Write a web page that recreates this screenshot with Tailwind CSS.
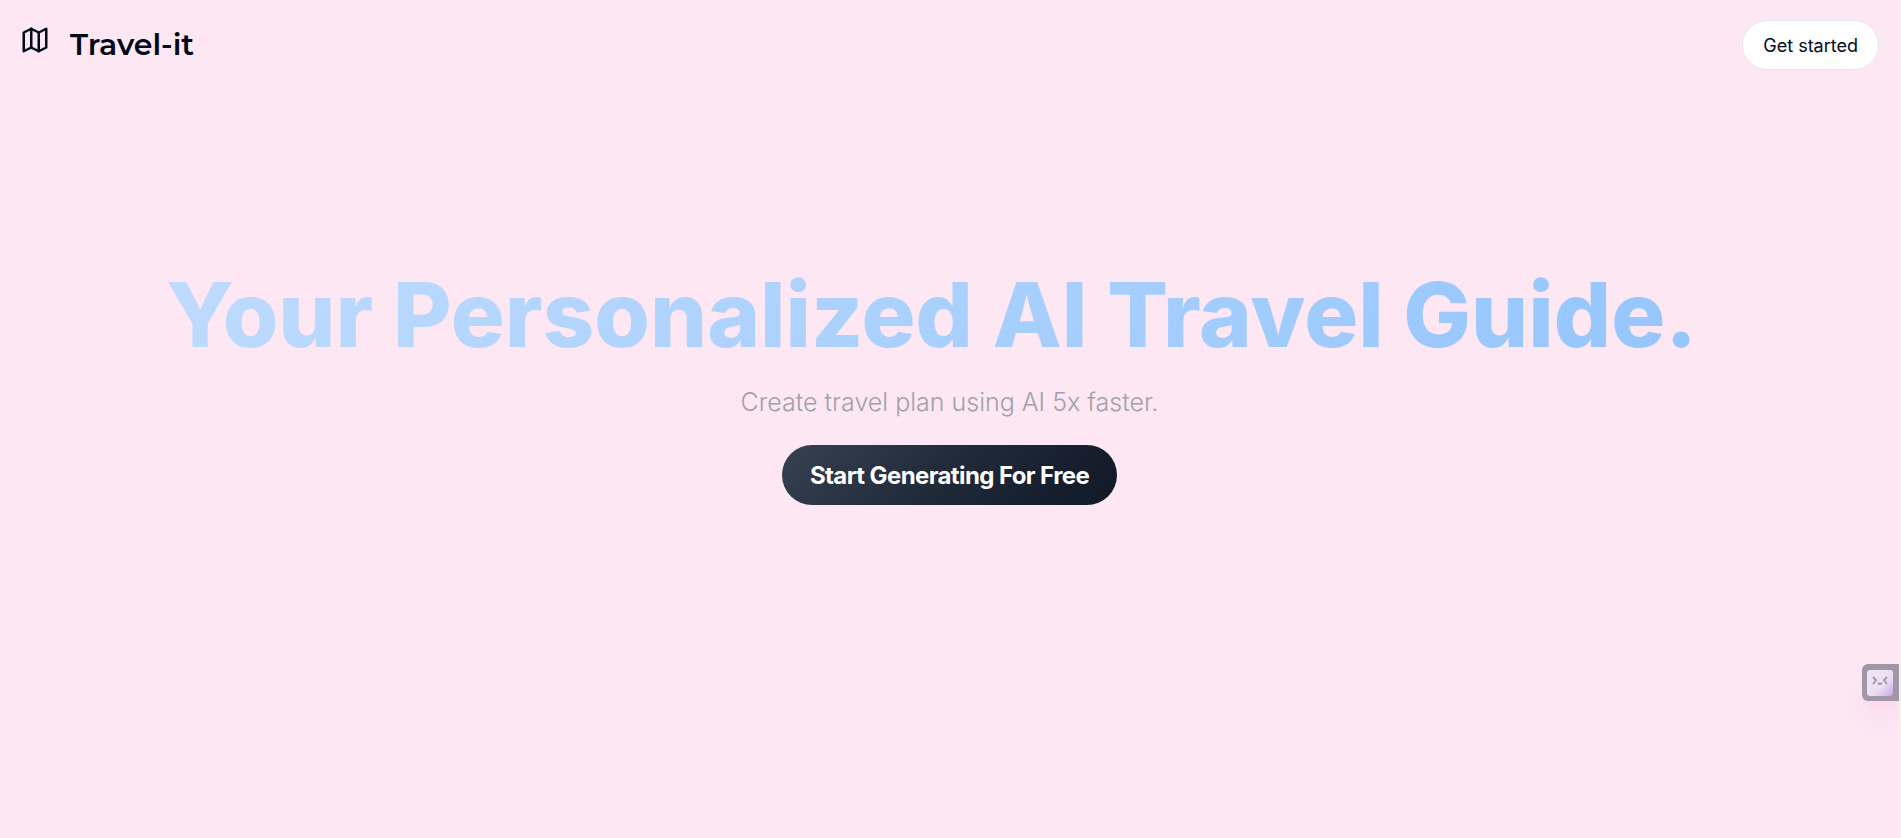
<!DOCTYPE html>
<html lang="en">
<head>
<meta charset="utf-8">
<meta name="viewport" content="width=device-width, initial-scale=1">
<title>Travel-it</title>
<script src="https://cdn.jsdelivr.net/npm/@tailwindcss/browser@4"></script>
</head>
<body class="flex min-h-screen flex-col border-r-2 border-[#f1f1f1] bg-[#fce7f3] font-['Inter',sans-serif] text-[#020817]">
  <header class="flex items-center justify-between px-5 pt-5">
    <a href="#" class="flex items-center gap-5">
      <svg class="mb-2.5 size-[30px]" viewBox="0 0 24 24" fill="none" stroke="currentColor" stroke-width="2" stroke-linecap="round" stroke-linejoin="round" aria-hidden="true">
        <polygon points="3 6 9 3 15 6 21 3 21 18 15 21 9 18 3 21"/>
        <line x1="9" x2="9" y1="3" y2="18"/>
        <line x1="15" x2="15" y1="6" y2="21"/>
      </svg>
      <span class="font-['Montserrat','Inter',sans-serif] text-[30px] leading-10 font-semibold">Travel-it</span>
    </a>
    <button type="button" class="h-[50px] rounded-full border border-slate-200 bg-white px-5 text-[18px]">Get started</button>
  </header>
  <main class="flex flex-col items-center pt-[200px]">
    <h1 class="bg-linear-[135deg] from-[#bfdbfe] to-[#93c5fd] bg-clip-text pr-9 text-[90px] leading-[90px] font-extrabold text-transparent">Your Personalized AI Travel Guide.</h1>
    <p class="mt-6 text-[25px] leading-9 font-light text-[#a1a1aa]">Create travel plan using AI 5x faster.</p>
    <button type="button" class="mt-[25px] h-[60px] rounded-full bg-linear-[135deg] from-[#374151] via-[#1f2937] to-[#111827] px-7 pt-0.5 text-[24px] font-bold tracking-tight text-white">Start Generating For Free</button>
  </main>
  <button type="button" aria-label="Open assistant" class="absolute top-[664px] right-0 flex h-[37px] w-[39px] items-center rounded-l-md bg-[#a096a6] pl-[5px] shadow-xl shadow-pink-300/20">
    <svg class="size-[26px]" viewBox="0 0 26 26" fill="none" aria-hidden="true">
      <defs><linearGradient id="face" x1="0" y1="0" x2="1" y2="1"><stop offset="0" stop-color="#f1e7f2"/><stop offset=".6" stop-color="#eadff0"/><stop offset="1" stop-color="#cda5ea"/></linearGradient></defs>
      <rect width="26" height="26" rx="3" fill="url(#face)"/>
      <path d="M6 7l3 3-3 4M20 7l-3 3 3 4M11 13q2 2 4 0" stroke="#a096a6" stroke-width="1.8"/>
    </svg>
  </button>
  <div class="fixed inset-y-0 right-0 w-[2px] bg-[#f1f1f1]" aria-hidden="true"></div>
</body>
</html>
